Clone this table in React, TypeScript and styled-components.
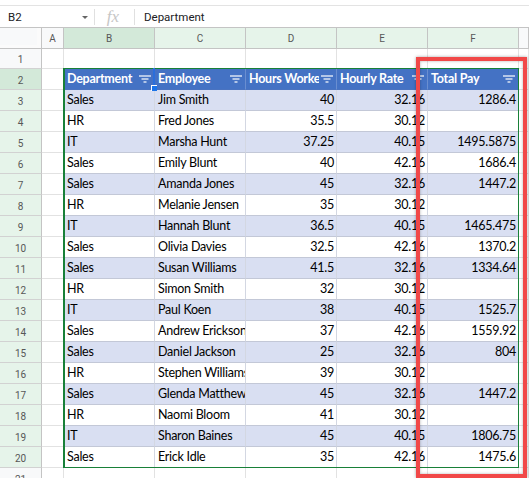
import React from 'react';
import styled, { createGlobalStyle, css } from 'styled-components';

const GlobalStyle = createGlobalStyle`
  html, body { margin: 0; padding: 0; background: #fff; overflow: hidden; }
  * { box-sizing: border-box; }
`;

type Row = [string, string, string, string, string];

const DATA: Row[] = [
  ['Sales', 'Jim Smith', '40', '32.16', '1286.4'],
  ['HR', 'Fred Jones', '35.5', '30.12', ''],
  ['IT', 'Marsha Hunt', '37.25', '40.15', '1495.5875'],
  ['Sales', 'Emily Blunt', '40', '42.16', '1686.4'],
  ['Sales', 'Amanda Jones', '45', '32.16', '1447.2'],
  ['HR', 'Melanie Jensen', '35', '30.12', ''],
  ['IT', 'Hannah Blunt', '36.5', '40.15', '1465.475'],
  ['Sales', 'Olivia Davies', '32.5', '42.16', '1370.2'],
  ['Sales', 'Susan Williams', '41.5', '32.16', '1334.64'],
  ['HR', 'Simon Smith', '32', '30.12', ''],
  ['IT', 'Paul Koen', '38', '40.15', '1525.7'],
  ['Sales', 'Andrew Erickson', '37', '42.16', '1559.92'],
  ['Sales', 'Daniel Jackson', '25', '32.16', '804'],
  ['HR', 'Stephen Williams', '39', '30.12', ''],
  ['Sales', 'Glenda Matthews', '45', '32.16', '1447.2'],
  ['HR', 'Naomi Bloom', '41', '30.12', ''],
  ['IT', 'Sharon Baines', '45', '40.15', '1806.75'],
  ['Sales', 'Erick Idle', '35', '42.16', '1475.6'],
];

const HEADERS = ['Department', 'Employee', 'Hours Worked', 'Hourly Rate', 'Total Pay'];
const LETTERS = ['A', 'B', 'C', 'D', 'E', 'F'];

const Page = styled.div`
  position: relative;
  width: 529px;
  height: 478px;
  overflow: hidden;
  background: #fff;
  display: flex;
  flex-direction: column;
`;

const TopGap = styled.div`
  flex: none;
  height: 5px;
`;

const FormulaBar = styled.div`
  flex: none;
  height: 23px;
  border-top: 1px solid #e3e3e3;
  border-bottom: 1px solid #c4c4c4;
  display: flex;
  align-items: center;
  font-family: Roboto, 'Liberation Sans', sans-serif;
  color: #202124;
`;

const NameBox = styled.div`
  width: 94px;
  height: 100%;
  display: flex;
  align-items: center;
  justify-content: space-between;
  padding: 0 6px 0 8px;
  font-size: 11.5px;
`;

const Caret = styled.span`
  width: 0;
  height: 0;
  border-left: 3.5px solid transparent;
  border-right: 3.5px solid transparent;
  border-top: 3.5px solid #666;
  margin-top: 1px;
`;

const Divider = styled.span`
  width: 1px;
  height: 16px;
  background: #e0e0e0;
  flex: none;
`;

const FxBox = styled.div`
  width: 39px;
  display: flex;
  justify-content: center;
  font-family: 'Liberation Serif', serif;
  font-style: italic;
  font-size: 17px;
  color: #c6c6c6;
  padding-right: 3px;
`;

const FormulaValue = styled.div`
  padding-left: 9px;
  font-size: 11.5px;
`;

const Sheet = styled.div`
  flex: none;
  display: grid;
  grid-template-columns: 42px 22px 91px 91px 91px 91px 91px 10px;
  grid-template-rows: 21px 20px repeat(20, 21px);
`;

const headFont = css`
  font-family: Roboto, 'Liberation Sans', sans-serif;
  font-size: 10px;
  color: #575757;
  display: flex;
  align-items: center;
  justify-content: center;
`;

const Corner = styled.div`
  background: #f8f9fa;
  border-right: 1px solid #c4c4c4;
  border-bottom: 1px solid #c4c4c4;
  box-shadow: inset -4px -3px 0 #fbfbfb;
`;

const ColHead = styled.div<{ $tone: 'plain' | 'sel' | 'active' }>`
  ${headFont}
  padding-top: 1px;
  border-right: 1px solid #c4c4c4;
  border-bottom: 1px solid #c4c4c4;
  background: ${(p) => (p.$tone === 'active' ? '#d3e9d9' : p.$tone === 'sel' ? '#e6f4ea' : '#f8f9fa')};
`;

const RowHead = styled.div<{ $tone: 'plain' | 'sel' | 'active' }>`
  ${headFont}
  padding-top: 2px;
  border-right: 1px solid #c4c4c4;
  border-bottom: 1px solid #d2d2d2;
  background: ${(p) => (p.$tone === 'active' ? '#d3e9d9' : p.$tone === 'sel' ? '#e6f4ea' : '#f8f9fa')};
`;

const cellFont = css`
  font-family: Lato, 'Open Sans', sans-serif;
  font-size: 12.5px;
  letter-spacing: -0.25px;
  line-height: 16px;
`;

const Cell = styled.div<{ $fill?: 'white' | 'band'; $num?: boolean }>`
  ${cellFont}
  display: flex;
  align-items: flex-end;
  justify-content: ${(p) => (p.$num ? 'flex-end' : 'flex-start')};
  padding: 0 2px 2px 3px;
  overflow: hidden;
  white-space: nowrap;
  color: #000;
  background: ${(p) => (p.$fill === 'band' ? '#d9dff2' : '#fff')};
  border-right: 1px solid ${(p) => (p.$fill ? '#d3d7e2' : '#e2e2e2')};
  border-bottom: 1px solid ${(p) => (p.$fill ? '#c3c8d7' : '#e2e2e2')};
`;

const TableHead = styled.div`
  ${cellFont}
  position: relative;
  display: flex;
  align-items: flex-end;
  padding: 0 2px 2px 3px;
  overflow: hidden;
  white-space: nowrap;
  font-weight: 700;
  color: #fff;
  background: #4472c4;
  border-right: 1px solid #6a8ed0;
  border-bottom: 1px solid #4a73c0;
`;

const FilterWrap = styled.span`
  position: absolute;
  right: 2px;
  top: 0;
  bottom: 1px;
  display: flex;
  align-items: center;
  padding: 0 1px 0 2px;
  background: #4472c4;
`;

const Overlay = styled.div`
  position: absolute;
  pointer-events: none;
`;

const Selection = styled(Overlay)`
  left: 63px;
  top: 68px;
  width: 456px;
  height: 400px;
  border: 1px solid #188038;
  border-left-width: 2px;
`;

const ActiveCell = styled(Overlay)`
  left: 153px;
  top: 68px;
  width: 2px;
  height: 21px;
  background: #2a6fdb;
`;

const Handle = styled(Overlay)`
  left: 151px;
  top: 85px;
  width: 6px;
  height: 6px;
  background: #1a73e8;
  border-top: 1px solid #fff;
  border-left: 1px solid #fff;
`;

const RedBox = styled(Overlay)`
  left: 416px;
  top: 57px;
  width: 111px;
  height: 421px;
  border: 4px solid #f14848;
  box-shadow: 0 0 3px rgba(0, 0, 0, 0.35), inset 0 0 3px rgba(0, 0, 0, 0.3);
`;

const FilterIcon = () => (
  <svg width="12" height="8" viewBox="0 0 12 8">
    <g stroke="#fff" strokeWidth="1.2">
      <line x1="0" y1="1" x2="12" y2="1" />
      <line x1="2.5" y1="4" x2="9.5" y2="4" />
      <line x1="4.5" y1="7" x2="7.5" y2="7" />
    </g>
  </svg>
);

export default function App() {
  const rows: React.ReactNode[] = [];
  for (let r = 1; r <= 21; r++) {
    const inTable = r >= 2 && r <= 20;
    rows.push(
      <RowHead key={`rh${r}`} $tone={r === 2 ? 'active' : inTable ? 'sel' : 'plain'}>
        {r}
      </RowHead>
    );
    rows.push(<Cell key={`a${r}`} />);
    if (r === 2) {
      HEADERS.forEach((h, i) =>
        rows.push(
          <TableHead key={`h${i}`}>
            {h}
            <FilterWrap>
              <FilterIcon />
            </FilterWrap>
          </TableHead>
        )
      );
    } else if (inTable) {
      const d = DATA[r - 3];
      const fill = r % 2 === 1 ? 'band' : 'white';
      d.forEach((v, i) =>
        rows.push(
          <Cell key={`c${r}-${i}`} $fill={fill} $num={i >= 2}>
            {v}
          </Cell>
        )
      );
    } else {
      for (let i = 0; i < 5; i++) rows.push(<Cell key={`c${r}-${i}`} />);
    }
    rows.push(<Cell key={`g${r}`} />);
  }

  return (
    <Page>
      <GlobalStyle />
      <TopGap />
      <FormulaBar>
        <NameBox>
          <span>B2</span>
          <Caret />
        </NameBox>
        <Divider />
        <FxBox>fx</FxBox>
        <Divider />
        <FormulaValue>Department</FormulaValue>
      </FormulaBar>
      <Sheet>
        <Corner />
        {LETTERS.map((l, i) => (
          <ColHead key={l} $tone={i === 1 ? 'active' : i === 0 ? 'plain' : 'sel'}>
            {l}
          </ColHead>
        ))}
        <ColHead $tone="plain" />
        {rows}
      </Sheet>
      <Selection />
      <ActiveCell />
      <Handle />
      <RedBox />
    </Page>
  );
}
